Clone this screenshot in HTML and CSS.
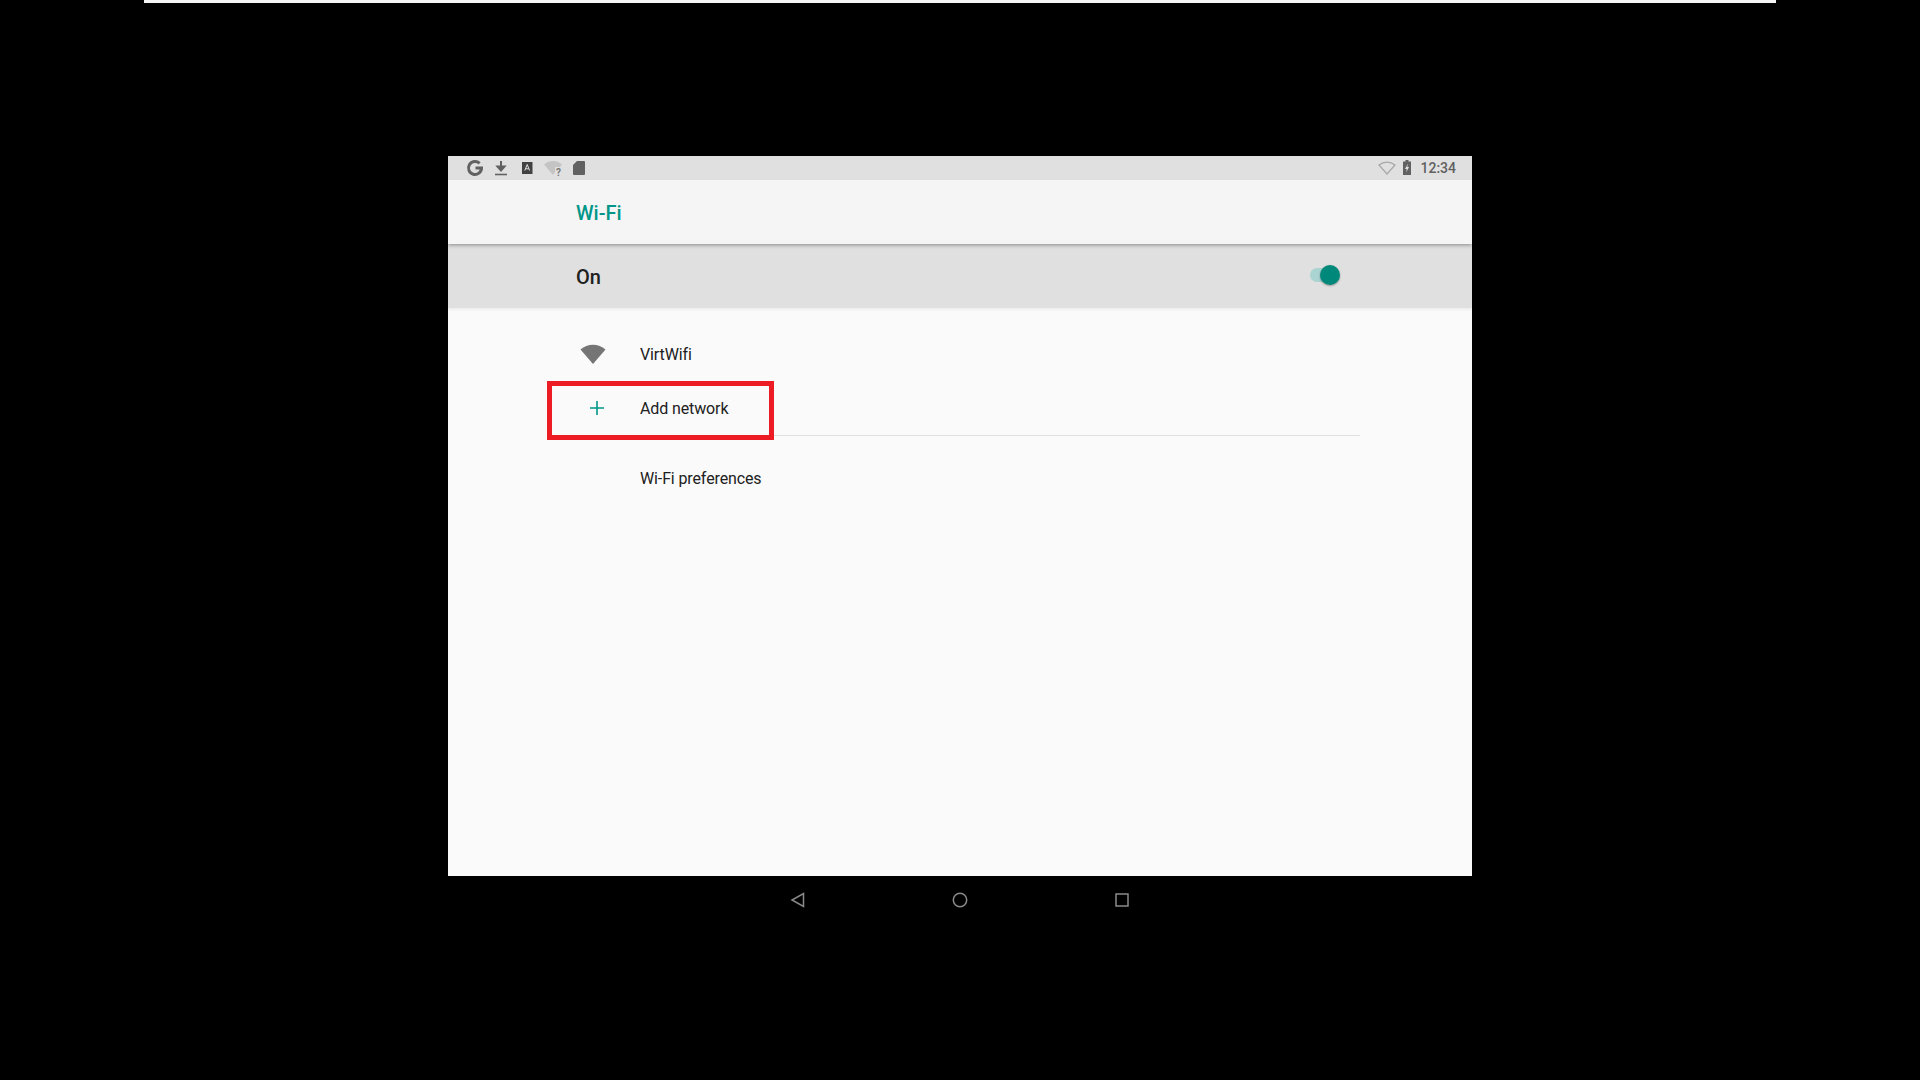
FILE: index.html
```html
<!DOCTYPE html>
<html lang="en">
<head>
    <meta charset="UTF-8">
    <title>Wi-Fi</title>
    <link rel="stylesheet" href="styles.css">
</head>
<body>
    <div class="top-strip"></div>

    <div class="screen">
        <div class="status-bar">
            <div class="status-icons">
                <svg class="status-icon" viewBox="0 0 26 24"><path d="M17.600 7.400A6.500 6.500 0 1 0 19.500 12H13.500" fill="none" stroke="#616161" stroke-width="3"/></svg>
                <svg class="status-icon" viewBox="0 0 26 24"><path d="M13 5v7M9.500 10.500l3.500 4 3.500-4z" fill="#616161" stroke="#616161" stroke-width="2"/><path d="M7 18.500h12" stroke="#616161" stroke-width="1.600"/></svg>
                <svg class="status-icon" viewBox="0 0 26 24"><rect x="8" y="6" width="10.500" height="12" fill="#424242"/><path d="M10.800 14.500 13.200 8.500l2.400 6M11.600 12.800h3.200" fill="none" stroke="#e0e0e0" stroke-width="1"/></svg>
                <svg class="status-icon" viewBox="0 0 26 24"><path d="M4 8.500a13.500 13.500 0 0 1 18 0L20 11h-5v5l-2 3z" fill="#c4c4c4"/><text class="mini-q" x="16" y="19.500">?</text></svg>
                <svg class="status-icon" viewBox="0 0 26 24"><path d="M11 5h7a1 1 0 0 1 1 1v12a1 1 0 0 1-1 1H8a1 1 0 0 1-1-1V9z" fill="#616161"/></svg>
            </div>
            <div class="status-right">
                <svg class="wifi-outline" viewBox="0 0 18 14"><path d="M1 4a12.500 12.500 0 0 1 16 0l-8 9z" fill="none" stroke="#a8a8a8" stroke-width="1.200"/></svg>
                <svg class="battery" viewBox="0 0 8 15"><path d="M2.500 0h3v1.500H8V15H0V1.500h2.500z" fill="#616161"/><path d="M5 3.500 2 9h1.800l-.6 3.500L6 7H4.200z" fill="#e0e0e0"/></svg>
                <span class="clock">12:34</span>
            </div>
        </div>

        <div class="app-bar">
            <span class="app-title">Wi-Fi</span>
        </div>

        <div class="master-switch">
            <span class="switch-label">On</span>
            <div class="toggle">
                <div class="toggle-track"></div>
                <div class="toggle-thumb"></div>
            </div>
        </div>

        <div class="network-list">
            <div class="row">
                <div class="row-icon">
                    <svg class="wifi-full" viewBox="0 0 26 20"><path d="M0.500 5.500a19 19 0 0 1 25 0L13 20z" fill="#757575"/></svg>
                </div>
                <span class="row-text">VirtWifi</span>
            </div>
            <div class="row row-divided">
                <div class="row-icon">
                    <svg class="plus" viewBox="0 0 14 14"><path d="M7 0v14M0 7h14" stroke="#009688" stroke-width="1.600"/></svg>
                </div>
                <span class="row-text">Add network</span>
            </div>
            <div class="row row-footer">
                <div class="row-icon"></div>
                <span class="row-text">Wi-Fi preferences</span>
            </div>
        </div>

        <div class="highlight"></div>
    </div>

    <div class="nav-bar">
        <div class="nav-btn">
            <svg class="nav-icon" viewBox="0 0 16 16"><path d="M13.500 1.500v13L2 8z" fill="none" stroke="#8a8a8a" stroke-width="1.500"/></svg>
        </div>
        <div class="nav-btn">
            <svg class="nav-icon" viewBox="0 0 16 16"><circle cx="8" cy="8" r="6.700" fill="none" stroke="#8a8a8a" stroke-width="1.500"/></svg>
        </div>
        <div class="nav-btn">
            <svg class="nav-icon" viewBox="0 0 16 16"><rect x="2" y="2" width="12" height="12" fill="none" stroke="#8a8a8a" stroke-width="1.500"/></svg>
        </div>
    </div>
</body>
</html>
```

FILE: styles.css
```css
* {
    margin: 0;
    padding: 0;
    box-sizing: border-box;
    font-family: 'Roboto', 'Liberation Sans', sans-serif;
}

body {
    background-color: #000;
    height: 1080px;
    overflow: hidden;
}

.top-strip {
    width: 1632px;
    height: 3px;
    margin: 0 auto;
    background-color: #f5f5f5;
}

.screen {
    position: relative;
    width: 1024px;
    height: 720px;
    margin: 153px auto 0;
    background-color: #fafafa;
}

.status-bar {
    display: flex;
    justify-content: space-between;
    align-items: center;
    height: 24px;
    padding: 0 16px 0 14px;
    background-color: #e0e0e0;
    position: relative;
    z-index: 2;
}

.status-icons {
    display: flex;
}

.status-icon {
    width: 26px;
    height: 24px;
}

.mini-q {
    font-size: 10px;
    font-weight: 700;
    fill: #757575;
}

.status-right {
    display: flex;
    align-items: center;
}

.wifi-outline {
    width: 18px;
    height: 14px;
    margin-right: 7px;
}

.battery {
    width: 8px;
    height: 15px;
    margin-right: 9px;
    margin-top: -1px;
}

.clock {
    font-size: 14px;
    font-weight: 500;
    color: #616161;
}

.app-bar {
    display: flex;
    align-items: center;
    height: 64px;
    padding: 2px 0 0 128px;
    background-color: #f5f5f5;
    box-shadow: 0 1px 4px rgba(0, 0, 0, 0.4);
    position: relative;
    z-index: 1;
}

.app-title {
    font-size: 20px;
    font-weight: 500;
    color: #009688;
}

.master-switch {
    display: flex;
    justify-content: space-between;
    align-items: center;
    height: 64px;
    padding: 0 132px 0 128px;
    background-color: #e0e0e0;
    box-shadow: 0 2px 2px rgba(0, 0, 0, 0.05);
}

.switch-label {
    font-size: 20px;
    font-weight: 500;
    color: #212121;
    margin-top: 2px;
}

.toggle {
    position: relative;
    width: 30px;
    height: 20px;
    margin-top: -2px;
}

.toggle-track {
    position: absolute;
    left: 0;
    top: 3px;
    width: 26px;
    height: 14px;
    border-radius: 7px;
    background-color: #aad4d1;
}

.toggle-thumb {
    position: absolute;
    right: 0;
    top: 0;
    width: 20px;
    height: 20px;
    border-radius: 50%;
    background-color: #00897b;
    box-shadow: 0 1px 2px rgba(0, 0, 0, 0.35);
}

.network-list {
    padding: 19px 112px 0 128px;
}

.row {
    display: flex;
    align-items: center;
    height: 55px;
}

.row-divided {
    height: 54px;
    border-bottom: 1px solid #e0e0e0;
}

.row-footer {
    height: 85px;
}

.row-icon {
    display: flex;
    align-items: center;
    width: 64px;
    height: 100%;
}

.wifi-full {
    width: 26px;
    height: 20px;
    margin-left: 4px;
    margin-top: -2px;
}

.plus {
    width: 14px;
    height: 14px;
    margin-left: 14px;
    margin-top: -1px;
}

.row-text {
    font-size: 16px;
    letter-spacing: -0.12px;
    color: #212121;
}

.highlight {
    position: absolute;
    left: 99px;
    top: 225px;
    width: 227px;
    height: 59px;
    border: 5px solid #ed1c24;
}

.nav-bar {
    display: flex;
    justify-content: center;
    height: 48px;
}

.nav-btn {
    display: flex;
    justify-content: center;
    align-items: center;
    width: 162px;
}

.nav-icon {
    width: 16px;
    height: 16px;
}
```
